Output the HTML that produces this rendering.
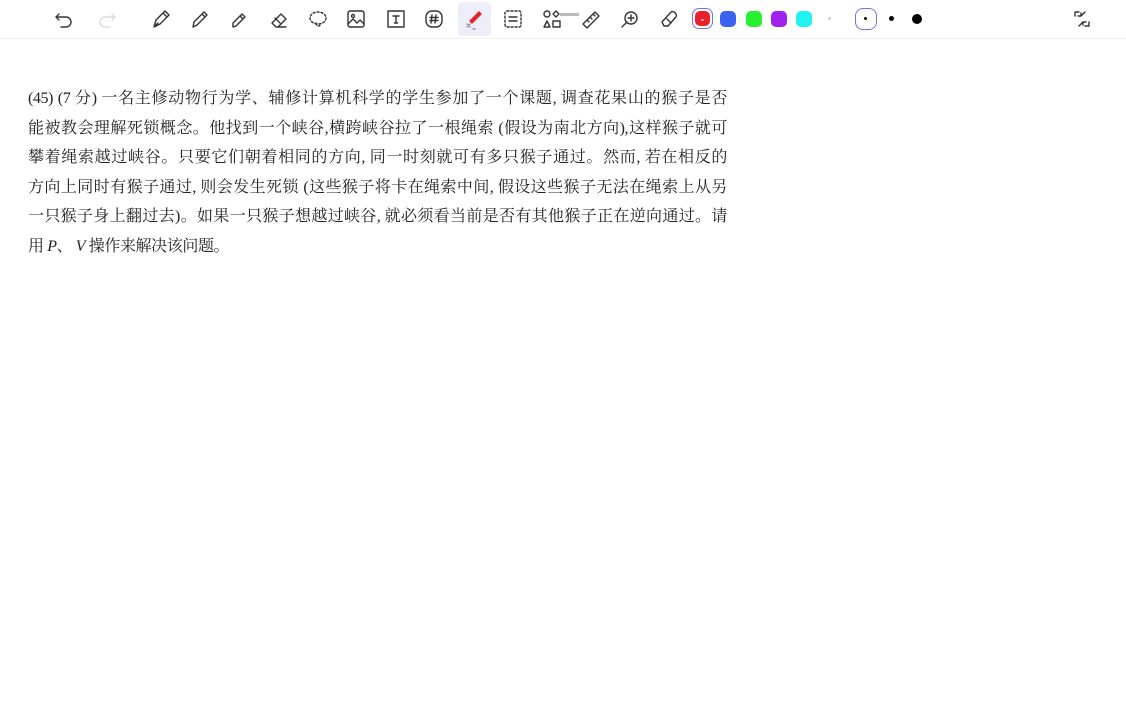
<!DOCTYPE html>
<html><head><meta charset="utf-8"><style>
body{margin:0;width:1126px;height:720px;background:#fff;overflow:hidden;position:relative;font-family:"Liberation Serif","Noto Serif CJK SC",serif}
.tb{position:absolute;left:0;top:0;width:1126px;height:38px;border-bottom:1px solid #f0f0f0}
.ic{position:absolute;top:8px;width:22px;height:22px}
.ic svg{width:22px;height:22px;fill:none;stroke:#333;stroke-width:1.4;stroke-linecap:round;stroke-linejoin:round}
.dot{position:absolute;top:11px;width:16px;height:16px;border-radius:5px}
.txt{position:absolute;left:28px;top:84px;width:699px;font-size:16px;letter-spacing:-0.4px;color:#222}
.l{height:29.6px;line-height:29.6px;text-align:justify;text-align-last:justify;white-space:nowrap}
</style></head><body>
<div class="tb">
<div class="ic" style="left:53px"><svg viewBox="0 0 22 22"><path d="M6 6l-3 3 3 3M3 9h10a5 5 0 010 10H8"/></svg></div>
<div class="ic" style="left:96px"><svg viewBox="0 0 22 22" style="stroke:#ddd"><path d="M16 6l3 3-3 3M19 9H9a5 5 0 000 10h5"/></svg></div>
<div class="ic" style="left:150px"><svg viewBox="0 0 22 22"><path d="M4 19l2-7 7-7 4 4-7 7zM4 19l4-4M13 5l2-2 4 4-2 2"/></svg></div>
<div class="ic" style="left:189px"><svg viewBox="0 0 22 22"><path d="M4 19l1-5 10-10 3 3-10 10zM13 6l3 3"/></svg></div>
<div class="ic" style="left:229px"><svg viewBox="0 0 22 22"><path d="M4 19v-4l9-9 3 3-9 9zM11 8l3 3"/></svg></div>
<div class="ic" style="left:268px"><svg viewBox="0 0 22 22"><path d="M8 19l-4-4 9-9 5 5-8 8zM9 19h9M7 10l5 5"/></svg></div>
<div class="ic" style="left:307px"><svg viewBox="0 0 22 22" style="stroke-dasharray:2 2"><ellipse cx="11" cy="10" rx="8" ry="6"/><path d="M9 15c0 3 3 4 4 2"/></svg></div>
<div class="ic" style="left:345px"><svg viewBox="0 0 22 22"><rect x="3" y="3" width="16" height="16" rx="2"/><circle cx="8" cy="8" r="1.5"/><path d="M3 16l5-5 4 4 3-3 4 4"/></svg></div>
<div class="ic" style="left:385px"><svg viewBox="0 0 22 22"><rect x="3" y="3" width="16" height="16"/><path d="M8 8h6M11 8v7M9.5 15h3"/></svg></div>
<div class="ic" style="left:423px"><svg viewBox="0 0 22 22"><rect x="3" y="3" width="16" height="16" rx="6"/><path d="M9 7l-1 8M13 7l-1 8M7 9.5h8M7 12.5h8"/></svg></div>
<div style="position:absolute;left:458px;top:2px;width:33px;height:34px;background:#eeeefb;border-radius:4px"></div>
<div class="ic" style="left:463px"><svg viewBox="0 0 22 22"><path d="M9 15l-2-2 9-9 2 2z" fill="#e8212b" stroke="#e8212b"/><path d="M4 16l3 3M7 16l-3 3M10 21h2" style="stroke:#999"/></svg></div>
<div class="ic" style="left:502px"><svg viewBox="0 0 22 22" style="stroke-dasharray:2 2"><rect x="3" y="3" width="16" height="16" rx="2"/><path d="M7 9h8M7 13h8" style="stroke-dasharray:none"/></svg></div>
<div class="ic" style="left:541px"><svg viewBox="0 0 22 22"><circle cx="6" cy="6" r="3"/><path d="M15 3l3 3-3 3-3-3zM6 13l3 6H3zM12 13h7v6h-7z"/></svg></div>
<div style="position:absolute;left:560px;top:13px;width:19px;height:3px;background:#bbb"></div>
<div class="ic" style="left:580px"><svg viewBox="0 0 22 22"><path d="M3 16L15 4l4 4L7 20zM7 12l2 2M10 9l2 2M13 6l2 2"/></svg></div>
<div class="ic" style="left:619px"><svg viewBox="0 0 22 22"><circle cx="12" cy="10" r="6"/><path d="M8 14l-5 5M12 7v6M9 10h6"/></svg></div>
<div class="ic" style="left:658px"><svg viewBox="0 0 22 22"><path d="M6 18l-2-4 9-10c2-1 4 0 5 2s0 3-1 4l-7 8zM9 11l4 4"/></svg></div>
<div style="position:absolute;left:692px;top:8px;width:21px;height:21px;border:1.5px solid #7a6fe0;border-radius:7px;box-sizing:border-box"></div>
<div class="dot" style="left:695px;top:11px;width:15px;height:15px;background:#e8212b;color:#fff;font-size:8px;text-align:center;line-height:15px;font-family:'DejaVu Sans'">⌄</div>
<div class="dot" style="left:720px;background:#3a63f0"></div>
<div class="dot" style="left:746px;background:#26f030"></div>
<div class="dot" style="left:771px;background:#a020f0"></div>
<div class="dot" style="left:796px;background:#22f2f0"></div>
<div style="position:absolute;left:828px;top:17px;width:3px;height:3px;border-radius:50%;background:#ccc"></div>
<div style="position:absolute;left:855px;top:8px;width:22px;height:22px;border:1.5px solid #7a6fe0;border-radius:8px;box-sizing:border-box"></div>
<div style="position:absolute;left:864px;top:17px;width:3px;height:3px;border-radius:50%;background:#000"></div>
<div style="position:absolute;left:889px;top:16px;width:5px;height:5px;border-radius:50%;background:#000"></div>
<div style="position:absolute;left:912px;top:14px;width:10px;height:10px;border-radius:50%;background:#000"></div>
<div class="ic" style="left:1071px"><svg viewBox="0 0 22 22"><path d="M4 8V4h4M18 14v4h-4M14 4l-4 4M10 5v3H7M8 18l4-4M12 17v-3h3"/></svg></div>
</div>
<div class="txt">
<div class="l">(45) (7 分) 一名主修动物行为学、辅修计算机科学的学生参加了一个课题, 调查花果山的猴子是否</div>
<div class="l">能被教会理解死锁概念。他找到一个峡谷,横跨峡谷拉了一根绳索 (假设为南北方向),这样猴子就可</div>
<div class="l">攀着绳索越过峡谷。只要它们朝着相同的方向, 同一时刻就可有多只猴子通过。然而, 若在相反的</div>
<div class="l">方向上同时有猴子通过, 则会发生死锁 (这些猴子将卡在绳索中间, 假设这些猴子无法在绳索上从另</div>
<div class="l">一只猴子身上翻过去)。如果一只猴子想越过峡谷, 就必须看当前是否有其他猴子正在逆向通过。请</div>
<div class="l" style="text-align-last:left">用 <i>P</i>、 <i>V</i> 操作来解决该问题。</div>
</div>
</body></html>
